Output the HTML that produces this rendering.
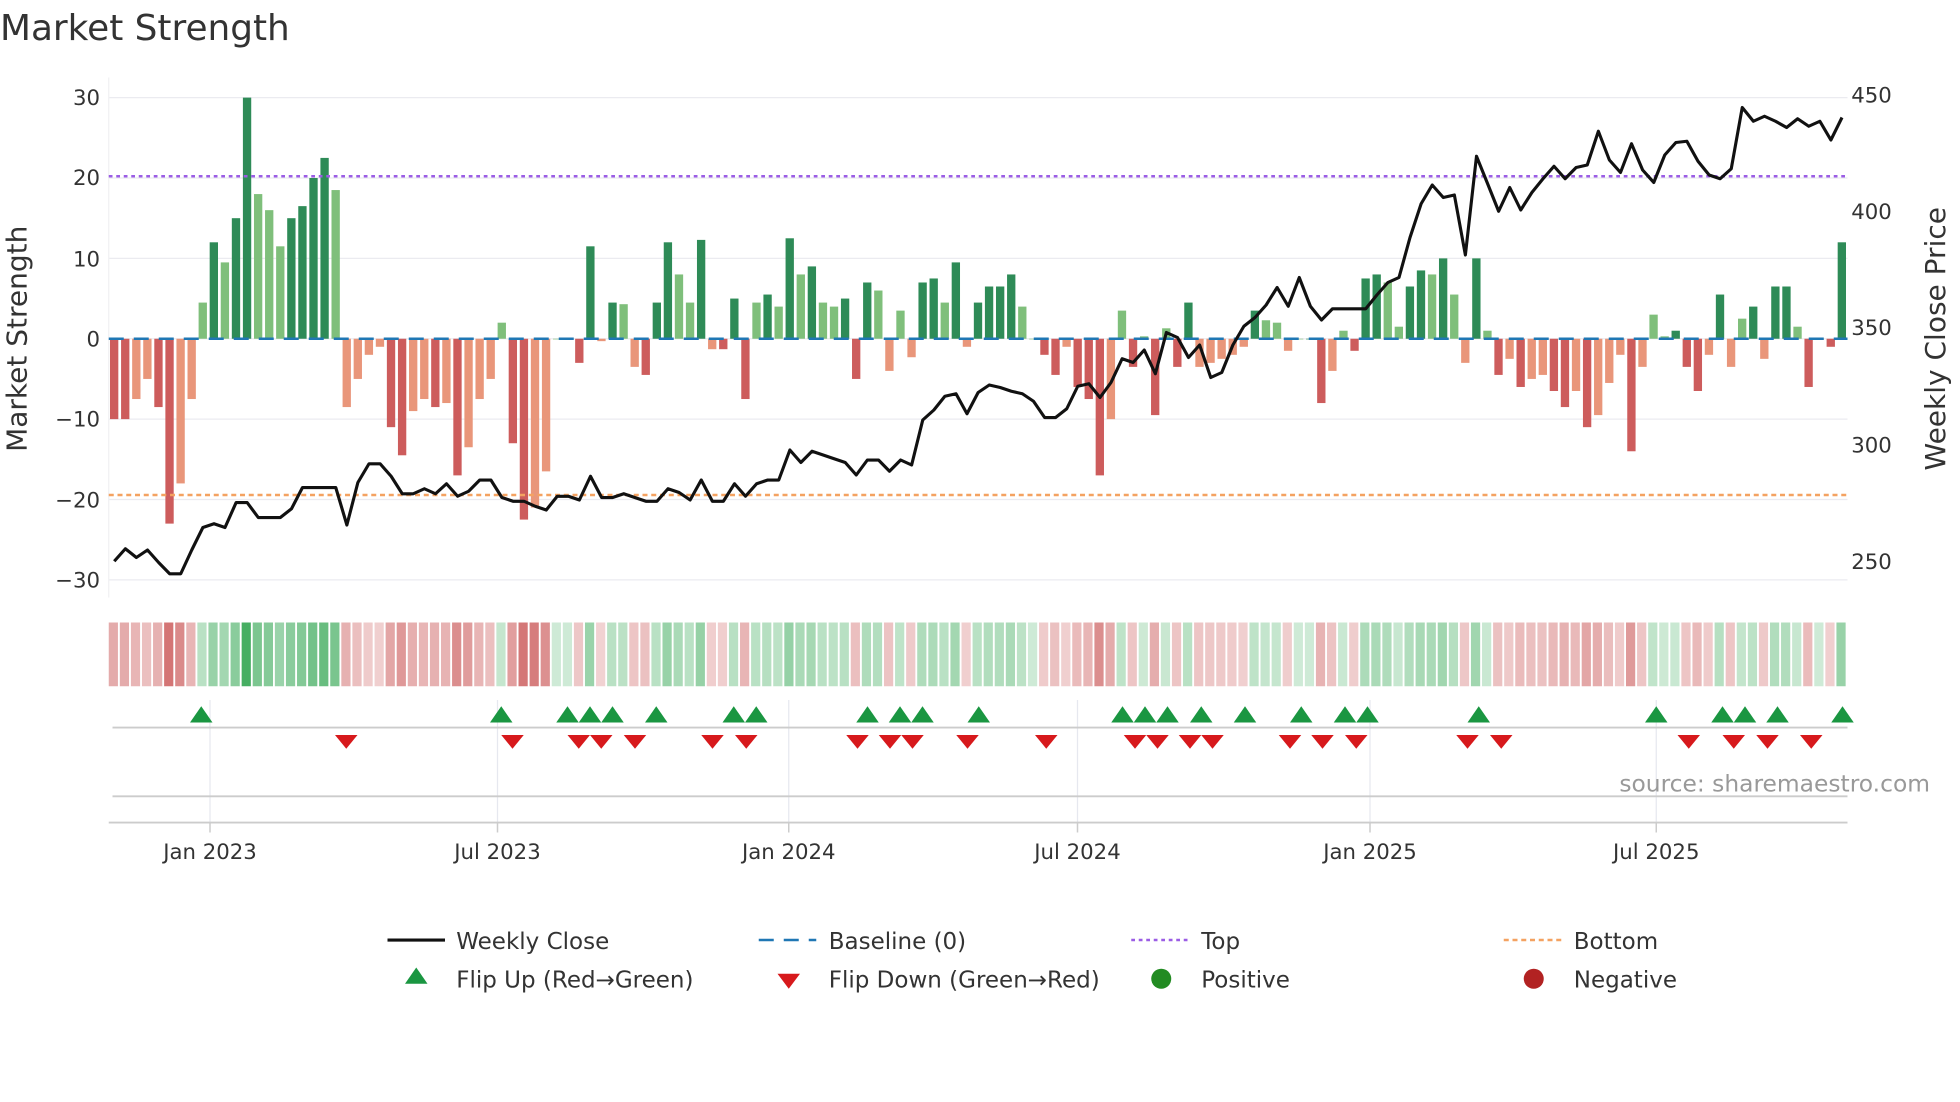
<!DOCTYPE html>
<html><head><meta charset="utf-8"><style>
html,body{margin:0;padding:0;background:#fff;}
svg{display:block;font-family:"DejaVu Sans","Liberation Sans",sans-serif;}
</style></head><body>
<svg id="s" width="1960" height="1102" viewBox="0 0 1568 881.6" xmlns="http://www.w3.org/2000/svg">
<rect width="1568" height="882" fill="#fff"/>
<text x="0" y="32" font-size="28.7" fill="#333">Market Strength</text>
<g id="grid"></g>
<g id="bars"></g>
<g id="heat"></g>
<g id="marks"></g>
<g font-size="17" fill="#333">
<text x="80" y="84" text-anchor="end">30</text>
<text x="80" y="148" text-anchor="end">20</text>
<text x="80" y="213" text-anchor="end">10</text>
<text x="80" y="277" text-anchor="end">0</text>
<text x="80" y="341" text-anchor="end">−10</text>
<text x="80" y="406" text-anchor="end">−20</text>
<text x="80" y="470" text-anchor="end">−30</text>
<text x="1481" y="82">450</text>
<text x="1481" y="175">400</text>
<text x="1481" y="268">350</text>
<text x="1481" y="362">300</text>
<text x="1481" y="455">250</text>
<text x="168" y="687" text-anchor="middle">Jan 2023</text>
<text x="398" y="687" text-anchor="middle">Jul 2023</text>
<text x="631" y="687" text-anchor="middle">Jan 2024</text>
<text x="862" y="687" text-anchor="middle">Jul 2024</text>
<text x="1096" y="687" text-anchor="middle">Jan 2025</text>
<text x="1325" y="687" text-anchor="middle">Jul 2025</text>
</g>
<text transform="translate(21,271) rotate(-90)" font-size="22.4" fill="#333" text-anchor="middle">Market Strength</text>
<text transform="translate(1556,271) rotate(-90)" font-size="22.4" fill="#333" text-anchor="middle">Weekly Close Price</text>
<text x="1544" y="633" font-size="18.7" fill="#999" text-anchor="end">source: sharemaestro.com</text>
<g font-size="18.4" fill="#333">
<line x1="310" y1="752" x2="356" y2="752" stroke="#111" stroke-width="2.5"/>
<text x="365" y="759">Weekly Close</text>
<line x1="607" y1="752" x2="653" y2="752" stroke="#1f77b4" stroke-width="2" stroke-dasharray="12,8"/>
<text x="663" y="759">Baseline (0)</text>
<line x1="905" y1="752" x2="951" y2="752" stroke="#9b5de5" stroke-width="2" stroke-dasharray="3,3"/>
<text x="961" y="759">Top</text>
<line x1="1203" y1="752" x2="1249" y2="752" stroke="#f4a261" stroke-width="2" stroke-dasharray="4,3"/>
<text x="1259" y="759">Bottom</text>
<polygon points="333,774 342,787 324,787" fill="#1a9641"/>
<text x="365" y="790">Flip Up (Red→Green)</text>
<polygon points="622,779 640,779 631,791" fill="#d7191c"/>
<text x="663" y="790">Flip Down (Green→Red)</text>
<circle cx="929" cy="783" r="8" fill="#228b22"/>
<text x="961" y="790">Positive</text>
<circle cx="1227" cy="783" r="8" fill="#b22222"/>
<text x="1259" y="790">Negative</text>
</g>
</svg>
<script>
var v=[-10,-10,-7.5,-5,-8.5,-23,-18,-7.5,4.5,12,9.5,15,30,18,16,11.5,15,16.5,20,22.5,18.5,-8.5,-5,-2,-1,-11,-14.5,-9,-7.5,-8.5,-8,-17,-13.5,-7.5,-5,2,-13,-22.5,-21,-16.5,0,0,-3,11.5,-0.3,4.5,4.3,-3.5,-4.5,4.5,12,8,4.5,12.3,-1.3,-1.3,5,-7.5,4.5,5.5,4,12.5,8,9,4.5,4,5,-5,7,6,-4,3.5,-2.3,7,7.5,4.5,9.5,-1,4.5,6.5,6.5,8,4,0,-2,-4.5,-1,-6,-7.5,-17,-10,3.5,-3.5,0.3,-9.5,1.3,-3.5,4.5,-3.5,-3,-2.5,-2,-1,3.5,2.3,2,-1.5,0,0,-8,-4,1,-1.5,7.5,8,7,1.5,6.5,8.5,8,10,5.5,-3,10,1,-4.5,-2.5,-6,-5,-4.5,-6.5,-8.5,-6.5,-11,-9.5,-5.5,-2,-14,-3.5,3,0.3,1,-3.5,-6.5,-2,5.5,-3.5,2.5,4,-2.5,6.5,6.5,1.5,-6,0,-1,12];
var p=[449,439,446,440,450,459,459,440,422,419,422,402,402,414,414,414,407,390,390,390,390,420,386,371,371,381,395,395,391,395,387,397,393,384,384,398,401,401,405,408,397,397,400,381,398,398,395,398,401,401,391,394,400,384,401,401,387,397,387,384,384,360,370,361,364,367,370,380,368,368,377,368,372,336,328,317,315,331,314,308,310,313,315,321,334,334,327,309,307,318,306,287,290,280,299,266,270,286,276,302,298,276,261,254,244,230,245,222,245,256,247,247,247,247,236,226,222,190,163,148,158,156,204,125,147,169,150,168,154,143,133,143,134,132,105,128,138,115,136,146,124,114,113,129,140,143,135,86,97,93,97,102,95,101,97,112,94];
var n=v.length,x0=87,x1=1478,w=(x1-x0)/n,ns="http://www.w3.org/2000/svg";
function el(g,t,a){var e=document.createElementNS(ns,t);for(var k in a)e.setAttribute(k,a[k]);document.getElementById(g).appendChild(e);return e;}
var Y=function(s){return 271-s*6.43;};
[30,20,10,0,-10,-20,-30].forEach(function(s){el('grid','line',{x1:x0,x2:x1,y1:Y(s),y2:Y(s),stroke:'#ebebf0','stroke-width':1});});
[168,398,631,862,1096,1325].forEach(function(x){el('grid','line',{x1:x,x2:x,y1:560,y2:658,stroke:'#e6e8ef','stroke-width':1});el('grid','line',{x1:x,x2:x,y1:658,y2:666,stroke:'#ccc','stroke-width':1.2});});
el('grid','line',{x1:x0,x2:x0,y1:62,y2:478,stroke:'#f0f0f3'});
el('grid','line',{x1:90,x2:x1,y1:582,y2:582,stroke:'#ccc','stroke-width':1.5});
el('grid','line',{x1:90,x2:x1,y1:637,y2:637,stroke:'#ccc','stroke-width':1.5});
el('grid','line',{x1:x0,x2:x1,y1:658,y2:658,stroke:'#ccc','stroke-width':1.5});
for(var i=0;i<n;i++){var s=v[i],pr=i?Math.abs(v[i-1]):0,dark=Math.abs(s)>=pr;
var c=s>=0?(dark?'#2e8b57':'#7fbf7b'):(dark?'#cd5c5c':'#e9967a');
var xl=x0+i*w+1,bw=w-2.2;
el('bars','rect',{x:xl,y:Math.min(Y(s),271),width:bw,height:Math.max(Math.abs(s)*6.43,0.5),fill:c});
var hc=s>=0?'rgba(60,170,90,'+(0.25+Math.min(Math.abs(s),30)/30*0.7)+')':'rgba(200,80,80,'+(0.25+Math.min(Math.abs(s),30)/30*0.7)+')';
el('heat','rect',{x:x0+i*w,y:498,width:w-1.5,height:51,fill:hc});}
el('bars','line',{x1:x0,x2:x1,y1:271,y2:271,stroke:'#1f77b4','stroke-width':2,'stroke-dasharray':'12,8'});
el('bars','line',{x1:x0,x2:x1,y1:141,y2:141,stroke:'#9b5de5','stroke-width':2,'stroke-dasharray':'3,3'});
el('bars','line',{x1:x0,x2:x1,y1:396,y2:396,stroke:'#f4a261','stroke-width':2,'stroke-dasharray':'4,3'});
var d='';for(i=0;i<p.length;i++){d+=(i?'L':'M')+(x0+i*w+w/2).toFixed(1)+','+p[i];}
el('bars','path',{d:d,fill:'none',stroke:'#111','stroke-width':2.5,'stroke-linejoin':'round'});
[161,401,454,472,490,525,587,605,694,720,738,783,898,916,934,961,996,1041,1076,1094,1183,1325,1378,1396,1422,1474].forEach(function(x){el('marks','polygon',{points:(x)+',565 '+(x+9)+',578 '+(x-9)+',578',fill:'#1a9641'});});
[277,410,463,481,508,570,597,686,712,730,774,837,908,926,952,970,1032,1058,1085,1174,1201,1351,1387,1414,1449].forEach(function(x){el('marks','polygon',{points:(x-9)+',588 '+(x+9)+',588 '+x+',599',fill:'#d7191c'});});
</script>
</body></html>
